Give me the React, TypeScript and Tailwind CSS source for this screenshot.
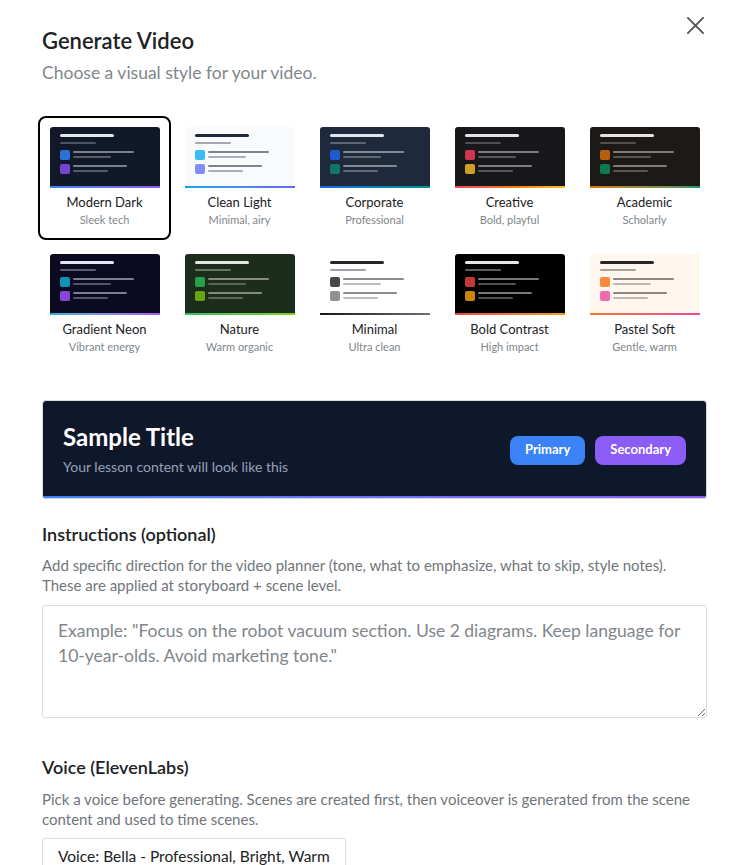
import { useState } from 'react';

interface VideoStyle {
  id: string;
  name: string;
  desc: string;
  bg: string;
  title: string;
  sub: string;
  line1: string;
  line2: string;
  sq1: string;
  sq2: string;
  bar: string;
}

const STYLES: VideoStyle[] = [
  {
    id: 'modern-dark', name: 'Modern Dark', desc: 'Sleek tech',
    bg: 'bg-[#111827]', title: 'bg-[#e2e8f0]', sub: 'bg-[#4b5563]', line1: 'bg-[#7b818c]', line2: 'bg-[#565c67]',
    sq1: 'bg-[#2f6fd8]', sq2: 'bg-[#7446d3]', bar: 'bg-linear-to-r from-[#3b82f6] to-[#8b5cf6]',
  },
  {
    id: 'clean-light', name: 'Clean Light', desc: 'Minimal, airy',
    bg: 'bg-[#f8fafc]', title: 'bg-[#1e293b]', sub: 'bg-[#a3aab5]', line1: 'bg-[#7d838d]', line2: 'bg-[#aab0ba]',
    sq1: 'bg-[#38bdf8]', sq2: 'bg-[#818cf8]', bar: 'bg-linear-to-r from-[#0ea5e9] to-[#6366f1]',
  },
  {
    id: 'corporate', name: 'Corporate', desc: 'Professional',
    bg: 'bg-[#1e293b]', title: 'bg-[#e2e8f0]', sub: 'bg-[#5a6575]', line1: 'bg-[#838b97]', line2: 'bg-[#5f6876]',
    sq1: 'bg-[#2159d0]', sq2: 'bg-[#117569]', bar: 'bg-linear-to-r from-[#2563eb] to-[#0d9488]',
  },
  {
    id: 'creative', name: 'Creative', desc: 'Bold, playful',
    bg: 'bg-[#18181b]', title: 'bg-[#e4e4e7]', sub: 'bg-[#4f4f55]', line1: 'bg-[#7d7d83]', line2: 'bg-[#56565c]',
    sq1: 'bg-[#cc3650]', sq2: 'bg-[#d09f24]', bar: 'bg-linear-to-r from-[#f43f5e] via-[#f97316] to-[#fbbf24]',
  },
  {
    id: 'academic', name: 'Academic', desc: 'Scholarly',
    bg: 'bg-[#1c1917]', title: 'bg-[#e7e5e4]', sub: 'bg-[#55504c]', line1: 'bg-[#817c78]', line2: 'bg-[#5a5552]',
    sq1: 'bg-[#b45f0b]', sq2: 'bg-[#0b7a50]', bar: 'bg-linear-to-r from-[#d97706] to-[#059669]',
  },
  {
    id: 'gradient-neon', name: 'Gradient Neon', desc: 'Vibrant energy',
    bg: 'bg-[#0b0a20]', title: 'bg-[#e4e4ee]', sub: 'bg-[#5c5b70]', line1: 'bg-[#7d7c90]', line2: 'bg-[#54536a]',
    sq1: 'bg-[#0e93b5]', sq2: 'bg-[#8b45d3]', bar: 'bg-linear-to-r from-[#06b6d4] to-[#a855f7]',
  },
  {
    id: 'nature', name: 'Nature', desc: 'Warm organic',
    bg: 'bg-[#1c2e1b]', title: 'bg-[#e3e8e1]', sub: 'bg-[#69765f]', line1: 'bg-[#838c7f]', line2: 'bg-[#5b6656]',
    sq1: 'bg-[#25a14b]', sq2: 'bg-[#6ba413]', bar: 'bg-linear-to-r from-[#22c55e] to-[#84cc16]',
  },
  {
    id: 'minimal', name: 'Minimal', desc: 'Ultra clean',
    bg: 'bg-white', title: 'bg-[#27272a]', sub: 'bg-[#a1a1aa]', line1: 'bg-[#8a8a8f]', line2: 'bg-[#bdbdc2]',
    sq1: 'bg-[#48484c]', sq2: 'bg-[#909096]', bar: 'bg-linear-to-r from-[#18181b] to-[#71717a]',
  },
  {
    id: 'bold-contrast', name: 'Bold Contrast', desc: 'High impact',
    bg: 'bg-black', title: 'bg-[#e5e5e5]', sub: 'bg-[#5c5c5c]', line1: 'bg-[#7a7a7a]', line2: 'bg-[#505050]',
    sq1: 'bg-[#c4383a]', sq2: 'bg-[#c8850a]', bar: 'bg-linear-to-r from-[#ef4444] to-[#f59e0b]',
  },
  {
    id: 'pastel-soft', name: 'Pastel Soft', desc: 'Gentle, warm',
    bg: 'bg-[#fff7ed]', title: 'bg-[#292524]', sub: 'bg-[#a8a29e]', line1: 'bg-[#8d8680]', line2: 'bg-[#bfb8b2]',
    sq1: 'bg-[#fb8a3c]', sq2: 'bg-[#f06aae]', bar: 'bg-linear-to-r from-[#f97316] to-[#ec4899]',
  },
];

function Thumb({ s }: { s: VideoStyle }) {
  return (
    <div className={`w-[110px] h-[61px] rounded-t-[3px] overflow-hidden flex flex-col ${s.bg}`}>
      <div className="flex-1 pl-[10px] pt-[7px]">
        <div className={`w-[54px] h-[3px] rounded-full ${s.title}`} />
        <div className={`w-[36px] h-[2px] rounded-full mt-[5px] ${s.sub}`} />
        <div className="flex items-start gap-[3px] mt-[6px]">
          <div className={`w-[10px] h-[10px] rounded-[2px] ${s.sq1}`} />
          <div className="pt-[1px]">
            <div className={`w-[61px] h-[2px] rounded-full ${s.line1}`} />
            <div className={`w-[38px] h-[2px] rounded-full mt-[3px] ${s.line2}`} />
          </div>
        </div>
        <div className="flex items-start gap-[3px] mt-[4px]">
          <div className={`w-[10px] h-[10px] rounded-[2px] ${s.sq2}`} />
          <div className="pt-[1px]">
            <div className={`w-[54px] h-[2px] rounded-full ${s.line1}`} />
            <div className={`w-[35px] h-[2px] rounded-full mt-[3px] ${s.line2}`} />
          </div>
        </div>
      </div>
      <div className={`h-[2px] ${s.bar}`} />
    </div>
  );
}

export default function App() {
  const [selected, setSelected] = useState('modern-dark');
  const [instructions, setInstructions] = useState('');

  return (
    <div className="h-screen overflow-y-scroll bg-white text-[#1f2328]" style={{ fontFamily: 'Lato, "Noto Sans", sans-serif' }}>
      <div className="relative ml-[42px] w-[665px] pt-[27px] pb-[200px]">
        {/* Close */}
        <button type="button" className="absolute top-[14px] right-0 text-[#555] p-0.5" aria-label="Close">
          <svg width="19" height="19" viewBox="0 0 20 20" fill="none" stroke="currentColor" strokeWidth={2} strokeLinecap="round">
            <path d="M2 2l16 16M18 2L2 18" />
          </svg>
        </button>

        {/* Header */}
        <h1 className="text-[22px] font-semibold leading-[28px] text-[#202124]">Generate Video</h1>
        <p className="text-[17.5px] leading-[24px] mt-[6px] text-[#80868b]">Choose a visual style for your video.</p>

        {/* Style grid */}
        <div className="grid grid-cols-[repeat(5,133px)] gap-x-[2px] gap-y-[3px] ml-[-4px] mt-[31px]">
          {STYLES.map(s => (
            <button
              key={s.id}
              type="button"
              onClick={() => setSelected(s.id)}
              className={`flex flex-col items-center rounded-lg border-2 pt-[9px] pb-[11px] ${
                selected === s.id ? 'border-black' : 'border-transparent'
              }`}
            >
              <Thumb s={s} />
              <span className="text-[13px] leading-[18px] mt-[5px] text-[#202124]">{s.name}</span>
              <span className="text-[11px] leading-[14px] mt-[2px] text-[#80868b]">{s.desc}</span>
            </button>
          ))}
        </div>

        {/* Preview */}
        <div className="mt-[33px] rounded-[4px] overflow-hidden bg-[#0f172a] border border-[#d8dbe0]">
          <div className="flex items-center justify-between px-[20px] pt-[20px] pb-[19px]">
            <div>
              <div className="text-[24px] font-bold leading-[32px] text-white">Sample Title</div>
              <div className="text-[14px] leading-[20px] mt-[4px] text-[#94a3b8]">Your lesson content will look like this</div>
            </div>
            <div className="flex gap-[10px] mt-[2px]">
              <span className="h-[29px] px-[15px] rounded-lg bg-[#3b82f6] text-white text-[13px] font-bold flex items-center">Primary</span>
              <span className="h-[29px] px-[15px] rounded-lg bg-[#8b5cf6] text-white text-[13px] font-bold flex items-center">Secondary</span>
            </div>
          </div>
          <div className="h-[2px] bg-linear-to-r from-[#3b82f6] to-[#8b5cf6]" />
        </div>

        {/* Instructions */}
        <h2 className="text-[18px] font-semibold leading-[24px] mt-[23px] text-[#202124]">Instructions (optional)</h2>
        <p className="text-[15px] leading-[20px] mt-[9px] text-[#70757a]">
          Add specific direction for the video planner (tone, what to emphasize, what to skip, style notes).
          These are applied at storyboard + scene level.
        </p>
        <textarea
          value={instructions}
          onChange={e => setInstructions(e.target.value)}
          placeholder={'Example: "Focus on the robot vacuum section. Use 2 diagrams. Keep language for 10-year-olds. Avoid marketing tone."'}
          className="block w-full h-[113px] mt-[10px] rounded-[3px] border border-[#dadce0] px-[15px] py-[12px] text-[17.5px] leading-[25px] placeholder:text-[#80868b] outline-none"
        />

        {/* Voice */}
        <h2 className="text-[18px] font-semibold leading-[24px] mt-[37px] text-[#202124]">Voice (ElevenLabs)</h2>
        <p className="text-[15px] leading-[20px] mt-[10px] text-[#70757a]">
          Pick a voice before generating. Scenes are created first, then voiceover is generated from the scene
          content and used to time scenes.
        </p>
        <div className="mt-[9px] inline-flex items-center h-[38px] border border-[#dadce0] rounded-[3px] px-[15px] text-[15.5px] text-[#202124]">
          Voice: Bella - Professional, Bright, Warm
        </div>
      </div>
    </div>
  );
}
